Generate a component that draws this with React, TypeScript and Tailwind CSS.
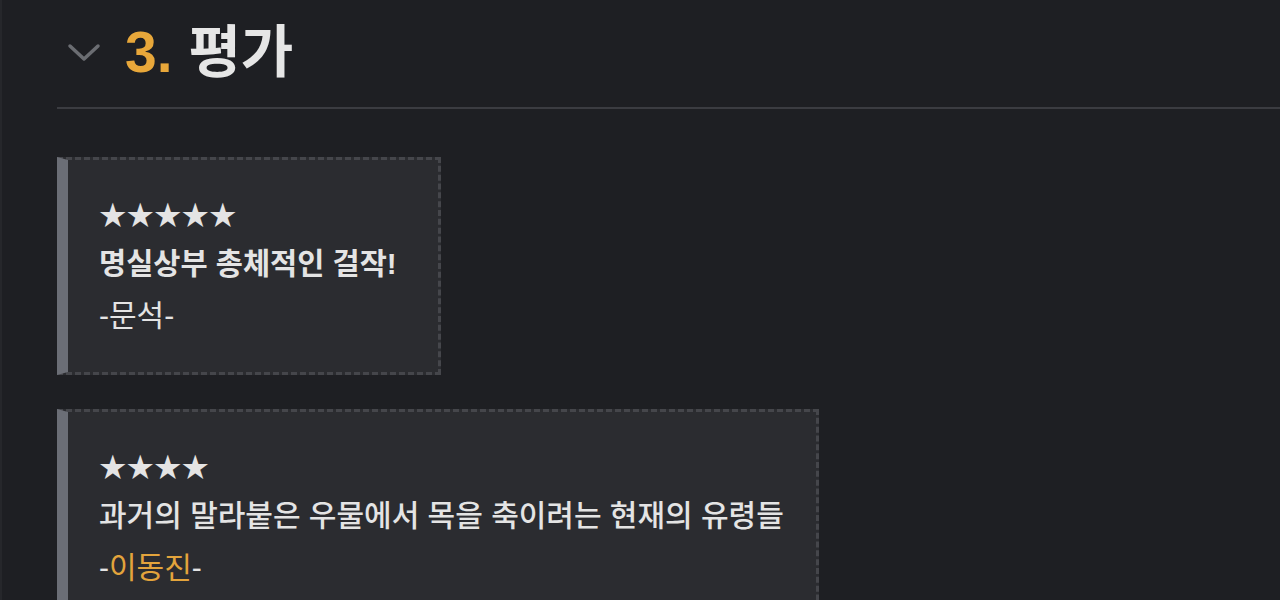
import React from "react";

const font = { fontFamily: '"Liberation Sans", "Noto Sans CJK KR", sans-serif' };

function Card({ stars, text, author, highlight, weight, size, width }: { stars: string; text: string; author: string; highlight?: boolean; weight: string; size: string; width: string }) {
  return (
    <div className={`${width} bg-[#2b2c30] border-[3px] border-dashed border-[#45464b] border-l-[11px] border-l-[#6b6e76] pl-[31px] pr-[30px] pt-[33px] pb-[30px] text-[#e4e4e4]`} style={{ borderLeftStyle: "solid" }}>
      <div className="text-[27.5px] leading-[46px]">{stars}</div>
      <div className={`${size} leading-[50px] ${weight}`}>{text}</div>
      <div className="text-[30px] leading-[53px]">
        -{highlight ? <span className="text-[#e3a43c]">{author}</span> : author}-
      </div>
    </div>
  );
}

export default function App() {
  return (
    <div className="w-[1280px] h-[600px] bg-[#1e1f23] overflow-hidden flex" style={font}>
      <div className="w-[2px] bg-[#26272b]" />
      <div className="flex-1 pl-[55px]">
        <div className="flex items-center h-[107px] pb-[3px]">
          <svg width="34" height="22" viewBox="0 0 34 22" className="ml-[10px] mr-[24px]">
            <path d="M3 5 L17 18 L31 5" fill="none" stroke="#6b6d72" strokeWidth="3.5" strokeLinecap="round" strokeLinejoin="round" />
          </svg>
          <div className="text-[57px] font-bold leading-none text-[#e6e6e6] whitespace-pre">
            <span className="text-[#e8a73a]">3.</span> 평가
          </div>
        </div>
        <div className="h-[2px] bg-[#3b3c41]" />
        <div className="flex flex-col items-start gap-[34px] mt-[48px]">
          <Card width="w-[384px]" size="text-[29.5px]" stars="★★★★★" text="명실상부 총체적인 걸작!" author="문석" weight="font-bold" />
          <Card width="w-[762px]" size="text-[30px]" stars="★★★★" text="과거의 말라붙은 우물에서 목을 축이려는 현재의 유령들" author="이동진" highlight weight="font-medium" />
        </div>
      </div>
    </div>
  );
}
